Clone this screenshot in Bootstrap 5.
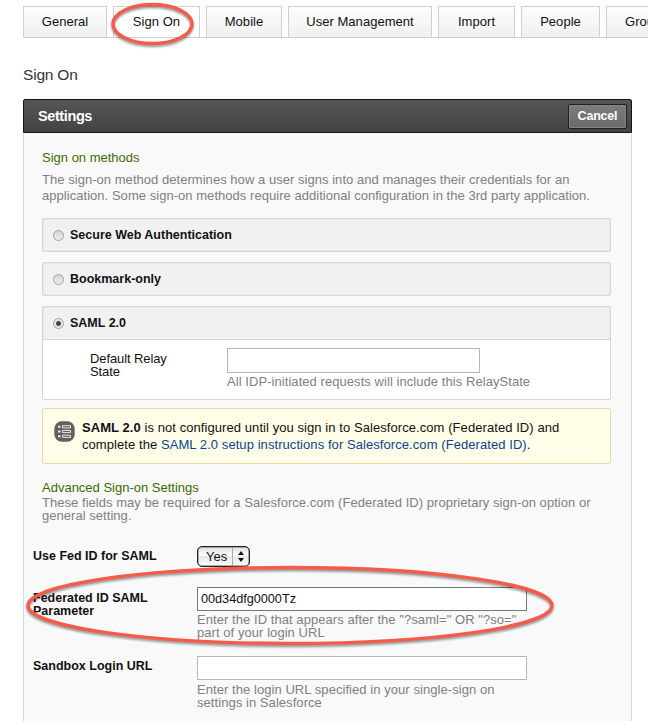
<!DOCTYPE html>
<html lang="en">
<head>
<meta charset="utf-8">
<title>Sign On</title>
<link href="https://cdn.jsdelivr.net/npm/bootstrap@5.3.0/dist/css/bootstrap.min.css" rel="stylesheet">
<style>
body{font-family:"Liberation Sans",Arial,sans-serif;font-size:13px;line-height:13px;color:#111;background:#fff;letter-spacing:.04px}
.page-wrap{width:648px;height:721px}
.app-tabs{height:32px;margin:6px 0 0 23px;gap:6px;border-bottom:1px solid #d2d2d2}
.app-tabs .nav-link{flex:none;height:32px;padding:0;line-height:29px;text-align:center;color:#111;border:1px solid #d0d0d0;border-radius:0;background:linear-gradient(#fdfdfd,#f0f0f0)}
.app-tabs .nav-link.active{background:#fff;border-color:#d0d0d0;color:#111}
.w-general{width:84px}.w-sign{width:87px}.w-mobile{width:76px}.w-user{width:144px}.w-import{width:77px}.w-people{width:79px}.w-groups{width:81px}
.page-title{font-size:15.5px;line-height:20px;color:#333;margin:27px 0 14px 23px;font-weight:400;letter-spacing:-.2px}
.settings{width:609px;margin-left:23px}
.settings-head{height:34px;background:linear-gradient(#555,#434343);border:1px solid #151515;border-radius:2px 2px 0 0;padding:0 4px 0 14px}
.settings-title{font-size:14.5px;line-height:18px;font-weight:700;color:#fff;margin:0;letter-spacing:-.4px}
.btn-cancel{width:59px;height:25px;padding:0;border:1px solid #202020;border-radius:2px;background:linear-gradient(#7d7d7d,#696969);color:#fff;font-size:12.5px;line-height:21px;font-weight:700;letter-spacing:-.2px;box-shadow:inset 0 0 0 1px #858585}
.settings-body{height:588px;background:#f9f9f9;border:solid #d8d8d8;border-width:0 1px;padding:18px 20px 0 18px}
.green-title{color:#3d6b00;font-size:13px;line-height:13px;margin:0;font-weight:400;letter-spacing:0}
.advanced-title{margin-top:17px}
.muted-text{color:#808080}
.intro{margin-top:8px;line-height:15.5px}
.advanced-text{margin-top:2px}
.methods{gap:10px;margin-top:15px}
.method{border:1px solid #d6d6d6;border-radius:2px;background:#f1f1f1;box-shadow:inset 0 0 0 1px #e9e9e9}
.method-head{height:32px;padding-left:10px;gap:6px;font-weight:700;font-size:12.5px;letter-spacing:0}
.method-head input{appearance:none;width:11px;height:11px;margin:1px 0 0;border:1px solid #a2a2a2;border-radius:50%;background:linear-gradient(#d4d4d4,#efefef)}
.method-head input:checked{background:radial-gradient(circle,#444 0 2px,#e8e8e8 3px)}
.relay{height:60px;background:#fff;border-top:1px solid #d6d6d6;padding:8px 0 0 47px}
.relay-label{width:137px;padding-top:4px;letter-spacing:-.1px}
.relay-help{margin-top:2px;letter-spacing:.06px}
.plain-input{border:1px solid #b6b6b6;border-radius:0;padding:0 3px;background:#fff;display:block;color:#111;font-size:12.7px;letter-spacing:-.02px}
.relay-input{width:253px;height:25px}
.notice{height:56px;margin-top:8px;border:1px solid #e5dba8;border-radius:2px;background:#fffde7;padding:10px 0 0 11px;gap:7px;line-height:17px;letter-spacing:.07px}
.notice-icon{margin-top:2px}
.notice a{color:#0a4595;text-decoration:none}
.field-row{margin-left:-9px}
.row-fed-use{margin-top:24px}.row-fed-id{margin-top:20px}.row-sandbox{margin-top:17px}
.field-label{width:164px;font-weight:700;flex:none;padding-top:5px;font-size:12.5px;letter-spacing:0}
.row-fed-use .field-label,.row-sandbox .field-label{padding-top:4px}
.field-help{margin-top:2px;letter-spacing:.06px}
.long-input{width:330px;height:24px}
.input-filled{border-color:#777}
.row-sandbox .field-help{margin-top:3px}
.yes-select{width:53px;height:21px;border:1px solid #222;box-shadow:inset 0 0 0 .5px #666;border-radius:5px;background:linear-gradient(#dedede,#fff 45%,#e9e9e9 50%,#fafafa)}
.yes-select span{width:35px;padding-left:8px;line-height:19px;border-right:1px solid #aaa}
.marks{left:0;top:0;pointer-events:none;filter:drop-shadow(0 2px 1.2px rgba(0,0,0,.4))}
</style>
</head>
<body>
<div class="page-wrap position-relative overflow-hidden">
<div class="overflow-hidden">
<nav class="nav nav-tabs app-tabs flex-nowrap">
<a class="nav-link w-general">General</a><a class="nav-link active w-sign">Sign On</a><a class="nav-link w-mobile">Mobile</a><a class="nav-link w-user">User Management</a><a class="nav-link w-import">Import</a><a class="nav-link w-people">People</a><a class="nav-link w-groups">Groups</a>
</nav>
</div>
<h1 class="page-title">Sign On</h1>
<section class="settings">
<header class="settings-head d-flex align-items-center justify-content-between"><h2 class="settings-title">Settings</h2><button class="btn btn-cancel">Cancel</button></header>
<div class="settings-body">
<h3 class="green-title">Sign on methods</h3>
<p class="muted-text intro text-nowrap mb-0">The sign-on method determines how a user signs into and manages their credentials for an<br>application. Some sign-on methods require additional configuration in the 3rd party application.</p>
<div class="methods d-flex flex-column">
<div class="method"><label class="method-head d-flex align-items-center"><input type="radio" name="m">Secure Web Authentication</label></div>
<div class="method"><label class="method-head d-flex align-items-center"><input type="radio" name="m">Bookmark-only</label></div>
<div class="method"><label class="method-head d-flex align-items-center"><input type="radio" name="m" checked>SAML 2.0</label>
<div class="relay d-flex"><div class="relay-label">Default Relay<br>State</div><div><input class="plain-input relay-input" aria-label="Default Relay State"><div class="muted-text relay-help text-nowrap">All IDP-initiated requests will include this RelayState</div></div></div></div>
</div>
<div class="notice d-flex text-nowrap">
<svg class="notice-icon" width="21" height="21" viewBox="0 0 21 21"><rect x=".3" y=".3" width="20.400" height="20.400" rx="7.500" fill="#606060"/><path d="M4 5.800h2.500M4 10.500h2.500M4 15.300h2.500" stroke="#e8e8e0" stroke-width="2"/><path d="M8.500 4.700h8v2.200h-8zM8.500 9.400h8v2.200h-8zM8.500 14.200h8v2.200h-8z" fill="none" stroke="#e8e8e0" stroke-width="1"/></svg>
<div><b>SAML 2.0</b> is not configured until you sign in to Salesforce.com (Federated ID) and<br>complete the <a href="#">SAML 2.0 setup instructions for Salesforce.com (Federated ID)</a>.</div>
</div>
<h3 class="green-title advanced-title">Advanced Sign-on Settings</h3>
<p class="muted-text advanced-text text-nowrap mb-0">These fields may be required for a Salesforce.com (Federated ID) proprietary sign-on option or<br>general setting.</p>
<div class="field-row row-fed-use d-flex"><div class="field-label">Use Fed ID for SAML</div><div class="yes-select d-flex"><span>Yes</span><svg width="16" height="18" viewBox="0 0 16 18"><path d="M8 4l3 4H5zM8 15l3-4H5z" fill="#111"/></svg></div></div>
<div class="field-row row-fed-id d-flex"><div class="field-label">Federated ID SAML<br>Parameter</div><div><input class="plain-input long-input input-filled" value="00d34dfg0000Tz" aria-label="Federated ID SAML Parameter"><div class="muted-text field-help text-nowrap">Enter the ID that appears after the "?saml=" OR "?so="<br>part of your login URL</div></div></div>
<div class="field-row row-sandbox d-flex"><div class="field-label">Sandbox Login URL</div><div><input class="plain-input long-input" aria-label="Sandbox Login URL"><div class="muted-text field-help text-nowrap">Enter the login URL specified in your single-sign on<br>settings in Salesforce</div></div></div>
</div>
</section>
<svg class="marks position-absolute" width="648" height="721" viewBox="0 0 648 721" fill="none" stroke="#f65b49" stroke-width="3.500"><ellipse cx="152.500" cy="24" rx="39.500" ry="19.500"/><ellipse cx="290" cy="605.500" rx="262" ry="38"/></svg>
</div>
<script src="https://cdn.jsdelivr.net/npm/bootstrap@5.3.0/dist/js/bootstrap.bundle.min.js"></script>
</body>
</html>
